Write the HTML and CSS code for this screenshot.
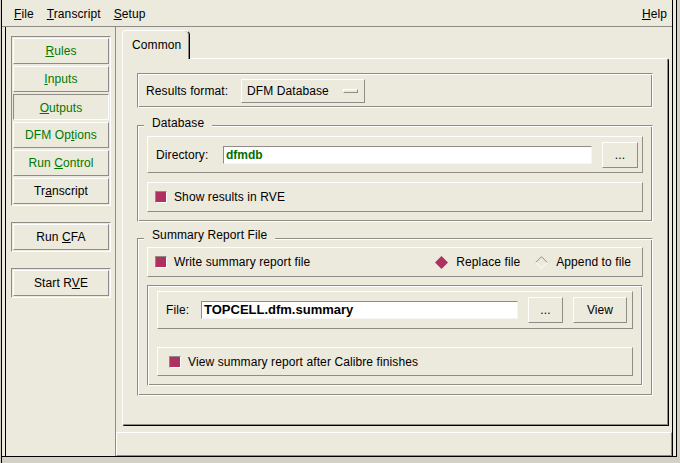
FILE: index.html
```html
<!DOCTYPE html>
<html>
<head>
<meta charset="utf-8">
<title>Calibre DFM</title>
<link rel="stylesheet" href="styles.css">
</head>
<body>
<div class="screen">
  <div class="window">
    <div class="frame">
      <div class="menubar">
        <span class="menu"><u>F</u>ile</span>
        <span class="menu"><u>T</u>ranscript</span>
        <span class="menu"><u>S</u>etup</span>
        <span class="menu help"><u>H</u>elp</span>
      </div>
      <div class="main">
        <div class="sidebar">
          <div class="btn-group">
            <div class="side-btn green"><span><u>R</u>ules</span></div>
            <div class="side-btn green"><span><u>I</u>nputs</span></div>
            <div class="side-btn green pressed"><span><u>O</u>utputs</span></div>
            <div class="side-btn green"><span>DFM Op<u>t</u>ions</span></div>
            <div class="side-btn green"><span>Run <u>C</u>ontrol</span></div>
            <div class="side-btn"><span>Tr<u>a</u>nscript</span></div>
          </div>
          <div class="btn-group">
            <div class="side-btn"><span>Run <u>C</u>FA</span></div>
          </div>
          <div class="btn-group">
            <div class="side-btn"><span>Start R<u>V</u>E</span></div>
          </div>
        </div>
        <div class="pane">
          <div class="tabs">
            <div class="tab">Common</div>
          </div>
          <div class="panel">
            <div class="groove results">
              <span class="results-lbl">Results format:</span>
              <div class="menubutton"><span>DFM Database</span><span class="mb-ind"></span></div>
            </div>

            <div class="groove labelframe db">
              <span class="legend">Database</span>
              <div class="raised row dir-row">
                <span class="row-lbl dir-lbl">Directory:</span>
                <div class="entry dir-entry">dfmdb</div>
                <div class="pbtn dots-a">...</div>
              </div>
              <div class="raised row check-row">
                <span class="check"></span><span>Show results in RVE</span>
              </div>
            </div>

            <div class="groove labelframe summary">
              <span class="legend">Summary Report File</span>
              <div class="raised row check-row write-row">
                <span class="check"></span><span>Write summary report file</span>
                <div class="radios">
                  <span class="radio">
                    <svg class="diamond" width="13" height="13" viewBox="0 0 13 13"><polygon points="6.5,0 13,6.5 6.5,13 0,6.5" fill="#b03060"/></svg>
                    <span>Replace file</span>
                  </span>
                  <span class="radio">
                    <svg class="diamond" width="13" height="13" viewBox="0 0 13 13"><polyline points="0.7,6.5 6.5,0.7 12.3,6.5" fill="none" stroke="#8e8c84" stroke-width="1"/><polyline points="0.7,6.5 6.5,12.3 12.3,6.5" fill="none" stroke="#ffffff" stroke-width="1"/></svg>
                    <span>Append to file</span>
                  </span>
                </div>
              </div>
              <div class="groove filebox">
                <div class="raised row file-row">
                  <span class="row-lbl file-lbl">File:</span>
                  <div class="entry file-entry">TOPCELL.dfm.summary</div>
                  <div class="pbtn dots-b">...</div>
                  <div class="pbtn view-btn">View</div>
                </div>
                <div class="raised row check-row view-row">
                  <span class="check"></span><span>View summary report after Calibre finishes</span>
                </div>
              </div>
            </div>
          </div>
          <div class="statusbar"></div>
        </div>
      </div>
    </div>
  </div>
</div>
</body>
</html>
```

FILE: styles.css
```css
* { box-sizing: border-box; }

html, body {
  margin: 0;
  padding: 0;
}

body {
  width: 680px;
  height: 463px;
  overflow: hidden;
  background: #d3d0c6;
  font-family: "Liberation Sans", Arial, sans-serif;
  font-size: 12px;
  letter-spacing: 0.1px;
  color: #000;
}

u {
  text-decoration: underline;
  text-underline-offset: 1px;
}

.screen {
  margin-left: 1px;
  height: 463px;
  border-left: 1px solid #000;
}

.window {
  width: 675px;
  height: 457px;
  background: #ece9dd;
  border-right: 1px solid #000;
  border-bottom: 1px solid #000;
  display: flex;
}

.frame {
  flex: none;
  width: 671px;
  display: flex;
  flex-direction: column;
  border-right: 1px solid #000;
}

/* ---------- menu bar ---------- */
.menubar {
  flex: none;
  height: 27px;
  display: flex;
  gap: 13px;
  padding: 7px 5px 0 12px;
  line-height: 14px;
  border-bottom: 1px solid #8e8c84;
  white-space: nowrap;
}

.menubar .help { margin-left: auto; }

/* ---------- main area ---------- */
.main {
  flex: 1;
  display: flex;
  margin-left: 3px;
  border-left: 1px solid #000;
}

.sidebar {
  flex: none;
  width: 110px;
  border-right: 1px solid #8e8c84;
  padding: 9px 0 0 5px;
  display: flex;
  flex-direction: column;
  gap: 16px;
}

.btn-group {
  width: 100px;
  padding: 1px;
  border: 1px solid;
  border-color: #8e8c84 #fff #fff #8e8c84;
  display: flex;
  flex-direction: column;
  gap: 2px;
}

.side-btn {
  height: 26px;
  border: 1px solid;
  border-color: #fff #8e8c84 #8e8c84 #fff;
  display: flex;
  align-items: center;
  justify-content: center;
  line-height: 14px;
  white-space: nowrap;
}

.side-btn.pressed {
  border-color: #8e8c84 #fff #fff #8e8c84;
  padding-top: 2px;
}

.green { color: #007800; }

/* ---------- right pane ---------- */
.pane {
  flex: 1;
  display: flex;
  flex-direction: column;
  padding-top: 3px;
}

.tabs {
  display: flex;
  padding-left: 6px;
}

.tab {
  position: relative;
  z-index: 1;
  width: 68px;
  height: 29px;
  margin-bottom: -1px;
  padding: 7px 0 0 9px;
  background: #ece9dd;
  border-top: 1px solid #fff;
  border-left: 1px solid #fff;
  border-right: 1px solid #000;
  border-radius: 4px 5px 0 0;
  box-shadow: inset -1px 0 0 #8e8c84;
  line-height: 14px;
}

.panel {
  height: 368px;
  margin: 0 3px 0 6px;
  border: 1px solid;
  border-color: #fff #000 #000 #fff;
  border-radius: 0 3px 0 3px;
  box-shadow: inset -1px -1px 0 #8e8c84;
  padding: 14px 15px 0 14px;
  display: flex;
  flex-direction: column;
}

.statusbar {
  height: 24px;
  margin-top: 6px;
  border: 1px solid;
  border-color: #fff #8e8c84 #8e8c84 #fff;
}

/* ---------- frames ---------- */
.groove {
  border: 1px solid;
  border-color: #8e8c84 #fff #fff #8e8c84;
  box-shadow: inset 1px 1px 0 #fff, inset -1px -1px 0 #8e8c84;
}

.raised {
  border: 1px solid;
  border-color: #fff #8e8c84 #8e8c84 #fff;
}

.results {
  height: 35px;
  display: flex;
  align-items: center;
  padding: 5px 8px 4px 8px;
  line-height: 14px;
}

.results-lbl {
  flex: none;
  width: 95px;
  white-space: nowrap;
}

.menubutton {
  flex: none;
  width: 124px;
  height: 24px;
  display: flex;
  align-items: center;
  padding-left: 5px;
  border: 1px solid;
  border-color: #fff #8e8c84 #8e8c84 #fff;
  line-height: 14px;
  white-space: nowrap;
}

.mb-ind {
  width: 15px;
  height: 4px;
  margin-left: auto;
  margin-right: 6px;
  border: 1px solid;
  border-color: #fff #8e8c84 #8e8c84 #fff;
}

.labelframe {
  position: relative;
  display: flex;
  flex-direction: column;
}

.legend {
  position: absolute;
  left: 6px;
  top: -10px;
  padding: 0 8px;
  background: #ece9dd;
  line-height: 14px;
  white-space: nowrap;
}

.summary .legend { top: -11px; }

.db {
  margin-top: 17px;
  padding: 10px 9px 9px 9px;
  gap: 9px;
}

.summary {
  margin-top: 16px;
  padding: 8px 9px 9px 9px;
  gap: 8px;
}

.row {
  display: flex;
  align-items: center;
  line-height: 14px;
  white-space: nowrap;
}

.dir-row {
  height: 37px;
  padding: 0 4px 0 8px;
}

.dir-lbl { width: 67px; flex: none; }

.entry {
  flex: 1;
  height: 18px;
  display: flex;
  align-items: center;
  padding-left: 2px;
  background: #fff;
  border: 1px solid;
  border-color: #8e8c84 #f6f5f0 #f6f5f0 #8e8c84;
  font-weight: bold;
  letter-spacing: 0;
  white-space: nowrap;
  overflow: hidden;
}

.dir-entry {
  color: #007000;
  font-size: 12px;
}

.file-entry {
  font-size: 13px;
}

.pbtn {
  flex: none;
  height: 26px;
  margin-left: 10px;
  display: flex;
  align-items: center;
  justify-content: center;
  border: 1px solid;
  border-color: #fff #8e8c84 #8e8c84 #fff;
}

.dots-a { width: 36px; }
.dots-b { width: 35px; }
.view-btn { width: 54px; }

.check-row {
  height: 30px;
  padding-left: 7px;
}

.check {
  flex: none;
  width: 12px;
  height: 12px;
  margin-right: 7px;
  background: #b03060;
  border: 1px solid;
  border-color: #8e8c84 #fff #fff #8e8c84;
}

.write-row {
  padding-right: 11px;
}

.radios {
  margin-left: auto;
  display: flex;
  align-items: center;
  gap: 15px;
}

.radio {
  display: flex;
  align-items: center;
  gap: 8px;
}

.diamond {
  display: block;
  flex: none;
}

.filebox {
  display: flex;
  flex-direction: column;
  gap: 18px;
  padding: 5px 9px 9px 9px;
}

.file-row {
  height: 38px;
  padding: 0 5px 0 8px;
}

.file-lbl { width: 35px; flex: none; }

.view-row {
  height: 29px;
  padding-left: 11px;
}
```
